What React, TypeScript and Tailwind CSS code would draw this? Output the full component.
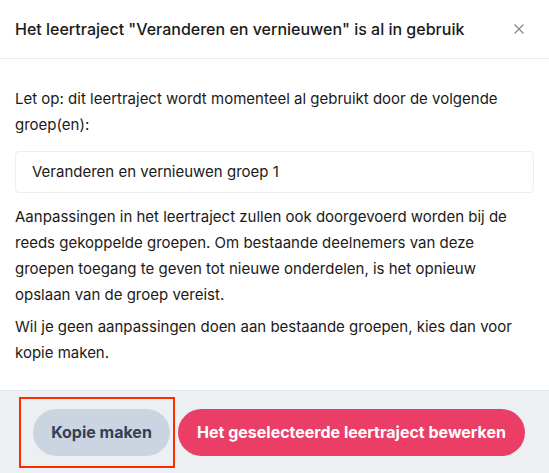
export default function App() {
  return (
    <div className="w-[549px] h-[473px] bg-white flex flex-col text-[#1a1a1a] font-['Inter',sans-serif] overflow-hidden">
      {/* Header */}
      <div className="h-[59px] flex items-center justify-between pl-[15px] pr-[24px] border-b border-[#ebebeb] shrink-0">
        <h2 className="text-[16px] font-medium">Het leertraject "Veranderen en vernieuwen" is al in gebruik</h2>
        <button className="text-[#8a8a8a]">
          <svg width="12" height="12" viewBox="0 0 12 12" fill="none" stroke="currentColor" strokeWidth="1.3">
            <path d="M1.5 1.5l9 9M10.5 1.5l-9 9" />
          </svg>
        </button>
      </div>

      {/* Body */}
      <div className="flex-1 px-[15px] pt-[27px] text-[15px] leading-[26px]">
        <p>Let op: dit leertraject wordt momenteel al gebruikt door de volgende groep(en):</p>
        <div className="mt-[13px] border border-[#eeeeee] rounded-[4px] h-[42px] flex items-center px-[16px]">
          Veranderen en vernieuwen groep 1
        </div>
        <p className="mt-[11px]">
          Aanpassingen in het leertraject zullen ook doorgevoerd worden bij de reeds gekoppelde groepen. Om bestaande deelnemers van deze groepen toegang te geven tot nieuwe onderdelen, is het opnieuw opslaan van de groep vereist.
        </p>
        <p className="mt-[6px]">Wil je geen aanpassingen doen aan bestaande groepen, kies dan voor kopie maken.</p>
      </div>

      {/* Footer */}
      <div className="h-[83px] shrink-0 bg-[#edf0f3] border-t border-[#e2e6ea] flex items-center pl-[19px] pr-[24px] gap-[3px]">
        <div className="border-2 border-[#ff2a00] pl-[12px] pr-[3px] py-[10px]">
          <button className="h-[47px] w-[137px] rounded-full bg-[#cbd5e1] text-[#334155] text-[16px] font-bold">
            Kopie maken
          </button>
        </div>
        <button className="h-[47px] flex-1 rounded-full bg-[#ea3e66] text-white text-[16px] font-bold">
          Het geselecteerde leertraject bewerken
        </button>
      </div>
    </div>
  );
}
